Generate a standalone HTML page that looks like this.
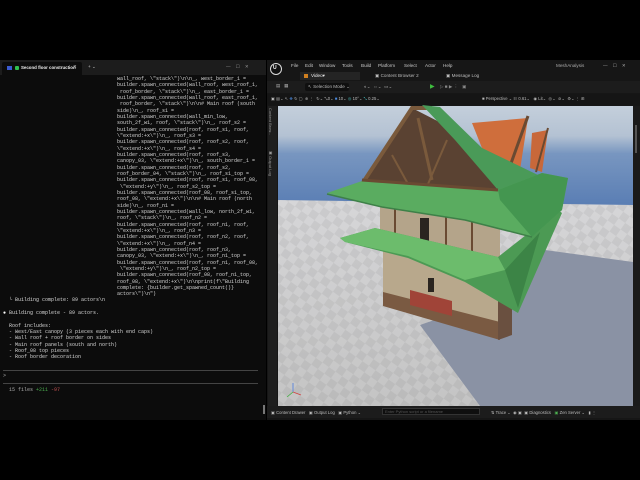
<!DOCTYPE html>
<html><head><meta charset="utf-8"><style>
*{margin:0;padding:0;box-sizing:border-box}
body{width:640px;height:480px;background:#000;position:relative;overflow:hidden;font-family:"Liberation Sans",sans-serif}
.abs{position:absolute}
#term{left:0;top:60px;width:266px;height:360px;background:#0c0c0c}
#tabbar{left:0;top:60px;width:266px;height:15px;background:#1c1c1c}
pre{font-family:"Liberation Mono",monospace;font-size:5px;line-height:6.33px;color:#d4d4d4;white-space:pre}
#ue{left:267px;top:60px;width:373px;height:360px;background:#161616}
.m{font-size:4.6px;color:#c8c8c8;top:63px}
.t{font-size:4.6px;color:#bbb}
</style></head><body>
<div id="term" class="abs"></div>
<div id="tabbar" class="abs"></div>
<div class="abs" style="left:2px;top:62px;width:80px;height:13px;background:#0c0c0c;border-radius:2px 2px 0 0"></div>
<div class="abs" style="left:7px;top:66px;width:5px;height:4px;background:#3a5ad0"></div>
<div class="abs" style="left:15px;top:66px;width:4px;height:4px;background:#2fbf4f;border-radius:1px"></div>
<div class="abs t" style="left:21px;top:65px;color:#eee;font-weight:bold;font-size:4.4px">Second floor construction</div>
<div class="abs t" style="left:73px;top:64px;color:#ccc">✕</div>
<div class="abs t" style="left:88px;top:64px;color:#ccc">+ ⌄</div>
<div class="abs t" style="left:226px;top:64px;color:#999">—&nbsp;&nbsp;&nbsp;&nbsp;☐&nbsp;&nbsp;&nbsp;&nbsp;✕</div>
<pre class="abs" style="left:117px;top:76px">wall_roof, \"stack\")\n\n_, west_border_1 =
builder.spawn_connected(wall_roof, west_roof_1,
 roof_border, \"stack\")\n_, east_border_1 =
builder.spawn_connected(wall_roof, east_roof_1,
 roof_border, \"stack\")\n\n# Main roof (south
side)\n_, roof_s1 =
builder.spawn_connected(wall_min_low,
south_2f_w1, roof, \"stack\")\n_, roof_s2 =
builder.spawn_connected(roof, roof_s1, roof,
\"extend:+x\")\n_, roof_s3 =
builder.spawn_connected(roof, roof_s2, roof,
\"extend:+x\")\n_, roof_s4 =
builder.spawn_connected(roof, roof_s3,
canopy_03, \"extend:+x\")\n_, south_border_1 =
builder.spawn_connected(roof, roof_s2,
roof_border_04, \"stack\")\n_, roof_s1_top =
builder.spawn_connected(roof, roof_s1, roof_08,
 \"extend:+y\")\n_, roof_s2_top =
builder.spawn_connected(roof_08, roof_s1_top,
roof_08, \"extend:+x\")\n\n# Main roof (north
side)\n_, roof_n1 =
builder.spawn_connected(wall_low, north_2f_w1,
roof, \"stack\")\n_, roof_n2 =
builder.spawn_connected(roof, roof_n1, roof,
\"extend:+x\")\n_, roof_n3 =
builder.spawn_connected(roof, roof_n2, roof,
\"extend:+x\")\n_, roof_n4 =
builder.spawn_connected(roof, roof_n3,
canopy_03, \"extend:+x\")\n_, roof_n1_top =
builder.spawn_connected(roof, roof_n1, roof_08,
 \"extend:+y\")\n_, roof_n2_top =
builder.spawn_connected(roof_08, roof_n1_top,
roof_08, \"extend:+x\")\n\nprint(f\"Building
complete: {builder.get_spawned_count()}
actors\")\n")</pre>
<pre class="abs" style="left:9px;top:297px">└ Building complete: 89 actors\n</pre>
<pre class="abs" style="left:3px;top:310px"><span style="color:#fff">●</span> Building complete - 89 actors.

  Roof includes:
  - West/East canopy (3 pieces each with end caps)
  - Wall roof + roof border on sides
  - Main roof panels (south and north)
  - Roof_08 top pieces
  - Roof border decoration</pre>
<div class="abs" style="left:3px;top:370px;width:255px;height:1px;background:#444"></div>
<pre class="abs" style="left:3px;top:373px;color:#aaa">&gt;</pre>
<div class="abs" style="left:3px;top:383px;width:255px;height:1px;background:#444"></div>
<pre class="abs" style="left:9px;top:387px;color:#aaa">15 files <span style="color:#4caf50">+211</span> <span style="color:#c05050">-97</span></pre>
<div class="abs" style="left:263px;top:405px;width:2px;height:9px;background:#777"></div>

<div id="ue" class="abs"></div>
<div class="abs" style="left:270px;top:63px;width:12px;height:12px;border-radius:50%;border:1px solid #ddd;background:#111"></div>
<div class="abs" style="left:273px;top:65px;font-size:5px;color:#fff;font-weight:bold">U</div>
<div class="abs m" style="left:291px">File</div>
<div class="abs m" style="left:305px">Edit</div>
<div class="abs m" style="left:319px">Window</div>
<div class="abs m" style="left:342px">Tools</div>
<div class="abs m" style="left:361px">Build</div>
<div class="abs m" style="left:378px">Platform</div>
<div class="abs m" style="left:404px">Select</div>
<div class="abs m" style="left:425px">Actor</div>
<div class="abs m" style="left:443px">Help</div>
<div class="abs m" style="left:556px;color:#aaa">MeshAnalysis</div>
<div class="abs m" style="left:603px;color:#aaa">—&nbsp;&nbsp;&nbsp;&nbsp;☐&nbsp;&nbsp;&nbsp;&nbsp;✕</div>
<div class="abs" style="left:300px;top:72px;width:60px;height:8px;background:#242424"></div>
<div class="abs" style="left:304px;top:74px;width:4px;height:4px;background:#d08020"></div>
<div class="abs t" style="left:311px;top:73px;color:#eee">Video▾</div>
<div class="abs t" style="left:375px;top:73px">▣ Content Browser 2</div>
<div class="abs t" style="left:446px;top:73px">▣ Message Log</div>
<div class="abs" style="left:267px;top:81px;width:373px;height:12px;background:#1c1c1c"></div>
<div class="abs t" style="left:276px;top:83px;color:#aaa">▤&nbsp;&nbsp;&nbsp;▦</div>
<div class="abs" style="left:305px;top:83px;width:44px;height:8px;background:#0f0f0f;border-radius:2px"></div>
<div class="abs t" style="left:308px;top:84px">↖ Selection Mode ⌄</div>
<div class="abs t" style="left:364px;top:84px;color:#aaa">◐⌄ &nbsp;⇔⌄ &nbsp;▭⌄</div>
<div class="abs t" style="left:430px;top:83px;color:#3fbf3f;font-size:6px">▶</div>
<div class="abs t" style="left:440px;top:84px;color:#888">▷ ■ ▶ ⋮ &nbsp;&nbsp;▣</div>
<div class="abs" style="left:267px;top:94px;width:373px;height:11px;background:#151515"></div>
<div class="abs t" style="left:271px;top:96px;color:#bbb;font-size:4.2px">▣ ▤⌄ ↖ <span style="color:#4a8ae0">✥</span> ↻ ▢ &nbsp;⊕ ⋮ &nbsp;↻⌄ ⤡0⌄ <span style="color:#4a8ae0">■</span> 10⌄ <span style="color:#4ac0c0">◎</span> 10°⌄ <span style="color:#4ac0c0">⤡</span> 0.25⌄</div>
<div class="abs t" style="left:482px;top:96px;color:#bbb;font-size:4.2px">■ Perspective ⌄ ☷ 0.61⌄ &nbsp;&nbsp;◉ Lit⌄ &nbsp;◎⌄ &nbsp;⊘⌄ &nbsp;⚙⌄ ⋮ ⊞</div>
<div class="abs" style="left:268px;top:106px;width:9px;height:300px;background:#1e1e1e"></div>
<div class="abs t" style="left:268px;top:108px;writing-mode:vertical-rl;font-size:4px;color:#999">Content Brow...</div>
<div class="abs t" style="left:268px;top:150px;writing-mode:vertical-rl;font-size:4px;color:#999">▣ Output Log</div>
<div class="abs" style="left:633px;top:106px;width:7px;height:300px;background:#1a1a1a"></div>
<div class="abs" style="left:635px;top:125px;width:2px;height:28px;background:#555"></div>

<svg class="abs" style="left:0;top:0" width="640" height="480" viewBox="0 0 640 480">
<defs>
<linearGradient id="sky" gradientUnits="userSpaceOnUse" x1="0" y1="106" x2="0" y2="205">
<stop offset="0" stop-color="#c4cfdb"/><stop offset="0.3" stop-color="#b4c2d3"/><stop offset="0.48" stop-color="#7896c0"/><stop offset="1" stop-color="#5a7eb4"/></linearGradient>
<linearGradient id="gr" gradientUnits="userSpaceOnUse" x1="0" y1="200" x2="0" y2="406"><stop offset="0" stop-color="#d6d6d8"/><stop offset="1" stop-color="#c4c4c4"/></linearGradient>
<pattern id="chk" width="16" height="16" patternUnits="userSpaceOnUse" patternTransform="rotate(35)"><rect width="8" height="8" fill="#000" opacity="0.05"/><rect x="8" y="8" width="8" height="8" fill="#000" opacity="0.05"/></pattern>
</defs>
<rect x="278" y="106" width="355" height="300" fill="url(#sky)"/>
<polygon points="278,200 633,205 633,406 278,406" fill="url(#gr)"/>
<polygon points="278,200 633,205 633,406 278,406" fill="url(#chk)"/>
<polygon points="545,250 633,262 633,406 480,406 420,325 520,290" fill="#8a92a4"/>
<polygon points="383,250 500,272 500,338 383,302" fill="#b8a88c"/>
<polygon points="383,292 500,322 500,340 383,306" fill="#7a5a42"/>
<polygon points="410,290 452,301 452,316 410,305" fill="#a04438"/>
<rect x="428" y="278" width="6" height="14" fill="#2a2520"/>
<polygon points="498,262 512,258 512,335 498,340" fill="#6a5040"/>
<polygon points="380,200 500,205 500,258 380,243" fill="#b4a48a"/>
<rect x="420" y="218" width="9" height="24" fill="#2a2520"/>
<line x1="395" y1="205" x2="395" y2="246" stroke="#6a4a32" stroke-width="2"/>
<line x1="446" y1="208" x2="446" y2="252" stroke="#6a4a32" stroke-width="2"/>
<line x1="472" y1="210" x2="472" y2="255" stroke="#6a4a32" stroke-width="2"/>
<polygon points="340,238 375,228 498,257 558,210 562,213 518,313 465,282 408,258 345,242" fill="#4c9a54"/>
<polygon points="340,238 375,228 498,257 505,270 465,280 408,256 345,242" fill="#6cbc6c"/>
<polygon points="505,270 540,232 518,308" fill="#3c8446"/>
<polygon points="412,108 365,182 498,190 455,130" fill="#5a4232"/>
<polyline points="362,184 412,108 432,108" fill="none" stroke="#7a5a3c" stroke-width="4"/>
<line x1="418" y1="118" x2="432" y2="180" stroke="#7a5a3c" stroke-width="3"/>
<line x1="392" y1="155" x2="408" y2="184" stroke="#7a5a3c" stroke-width="2"/>
<line x1="447" y1="140" x2="428" y2="184" stroke="#7a5a3c" stroke-width="2"/>
<polygon points="472,123 528,118 520,170 505,178 482,148" fill="#cf6e3c"/>
<polygon points="532,133 548,130 542,172 530,168" fill="#c8683a"/>
<line x1="528" y1="116" x2="505" y2="180" stroke="#6a4a32" stroke-width="3"/>
<line x1="548" y1="128" x2="536" y2="172" stroke="#6a4a32" stroke-width="2"/>
<polygon points="422,105 440,107 482,148 540,176 498,190 455,140" fill="#4a9a58"/>
<polygon points="327,193 365,180 452,187 498,190 542,173 568,178 562,210 532,237 465,220 382,207" fill="#5aac60"/>
<polygon points="498,190 542,173 568,178 562,210 532,237 500,200" fill="#449650"/>
<polyline points="327,194 382,207 465,220 532,237" fill="none" stroke="#3e8048" stroke-width="1.5"/>
<line x1="362" y1="180" x2="498" y2="190" stroke="#6a4a32" stroke-width="3"/>
<line x1="293" y1="392" x2="293" y2="383" stroke="#4a7ae0" stroke-width="0.8"/>
<line x1="293" y1="392" x2="301" y2="395" stroke="#d04040" stroke-width="0.8"/>
<line x1="293" y1="392" x2="287" y2="397" stroke="#40b040" stroke-width="0.8"/>
</svg>

<div class="abs" style="left:267px;top:406px;width:373px;height:12px;background:#1c1c1c"></div>
<div class="abs t" style="left:271px;top:410px;font-size:4.2px">▣ Content Drawer &nbsp;&nbsp;▣ Output Log &nbsp;&nbsp;▣ Python ⌄</div>
<div class="abs" style="left:382px;top:408px;width:98px;height:7px;background:#0f0f0f;border:0.5px solid #333"></div>
<div class="abs t" style="left:385px;top:409px;font-size:4px;color:#555">Enter Python script or a filename</div>
<div class="abs t" style="left:491px;top:410px;font-size:4.2px">⇅ Trace ⌄ &nbsp;◉ ▣ &nbsp;▣ Diagnostics &nbsp;&nbsp;<span style="color:#4caf50">▣</span> Zen Server ⌄ &nbsp;&nbsp;▮ ⋮</div>
</body></html>
